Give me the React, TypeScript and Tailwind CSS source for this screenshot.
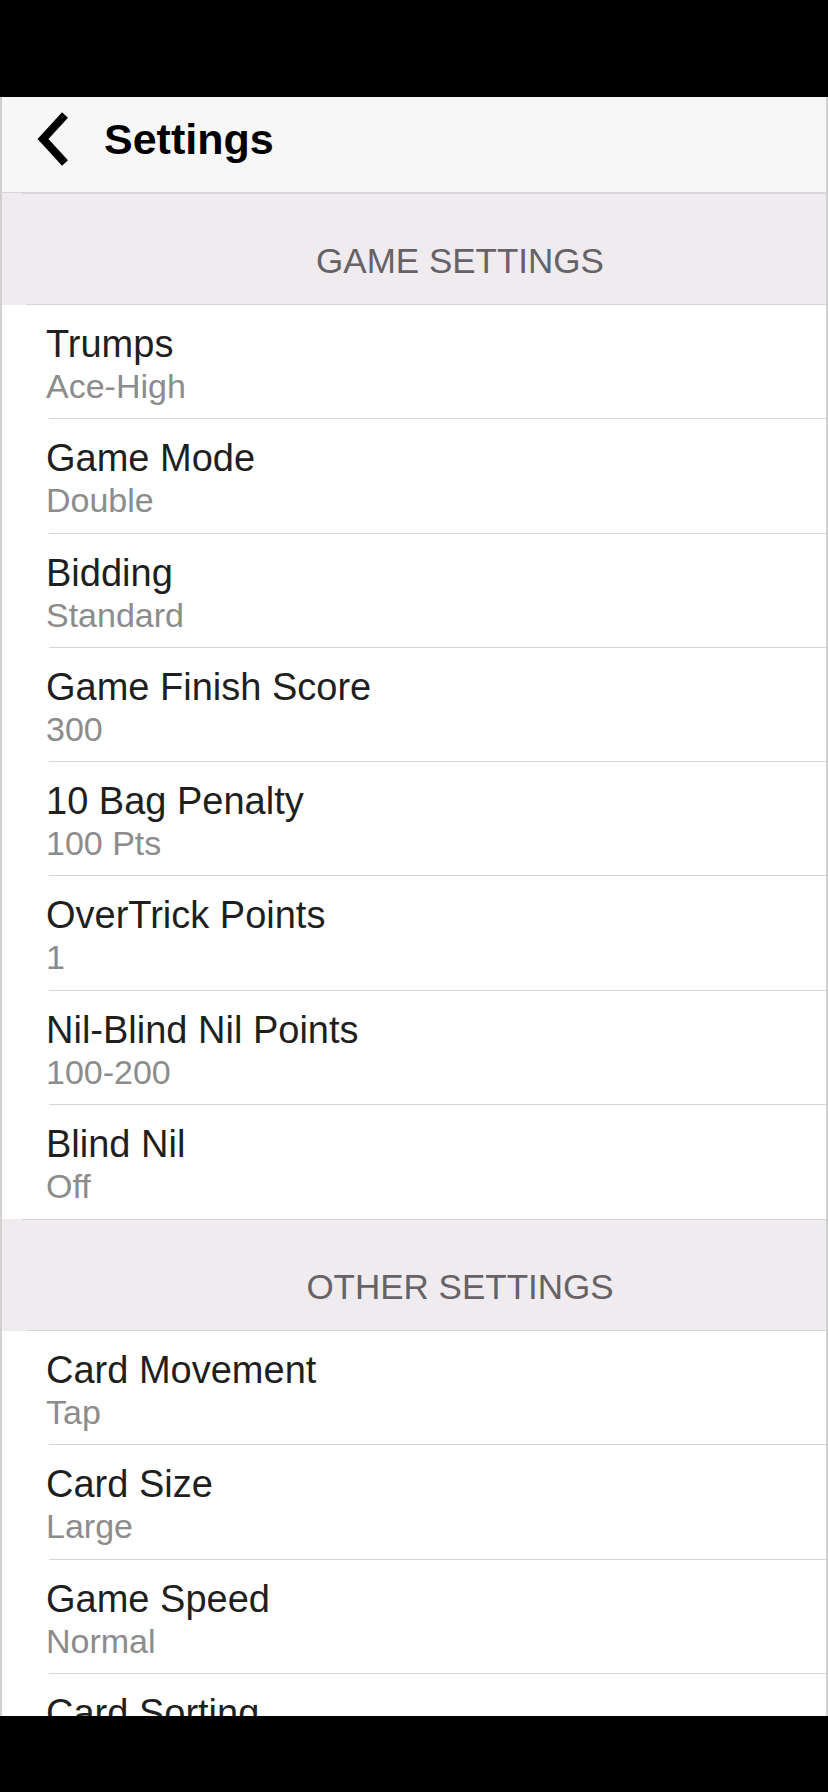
const gameSettings = [
  { title: 'Trumps', value: 'Ace-High' },
  { title: 'Game Mode', value: 'Double' },
  { title: 'Bidding', value: 'Standard' },
  { title: 'Game Finish Score', value: '300' },
  { title: '10 Bag Penalty', value: '100 Pts' },
  { title: 'OverTrick Points', value: '1' },
  { title: 'Nil-Blind Nil Points', value: '100-200' },
  { title: 'Blind Nil', value: 'Off' },
];

const otherSettings = [
  { title: 'Card Movement', value: 'Tap' },
  { title: 'Card Size', value: 'Large' },
  { title: 'Game Speed', value: 'Normal' },
  { title: 'Card Sorting', value: 'Ascending' },
];

const SectionHeader = ({ label }: { label: string }) => (
  <div className="relative h-[112px] bg-[#efebef] pl-[92px] pt-[50px] text-center">
    <div className="absolute left-[20px] right-0 top-0 h-px bg-[#d9d5d9]" />
    <div className="absolute left-[24px] right-0 bottom-0 h-px bg-[#d9d5d9]" />
    <p className="text-[35px] leading-none text-[#666266]">{label}</p>
  </div>
);

const SettingRow = ({ title, value, last }: { title: string; value: string; last?: boolean }) => (
  <div className="relative h-[114.25px] bg-white pl-[44px] pt-[20px]">
    <p className="text-[38px] leading-none text-[#1f1f1f]">{title}</p>
    <p className="mt-[6px] text-[34px] leading-none text-[#8c8c8c]">{value}</p>
    {!last && <div className="absolute left-[47px] right-0 bottom-0 h-px bg-[#d6d6d6]" />}
  </div>
);

export default function App() {
  return (
    <div
      className="flex h-[1792px] w-[828px] flex-col overflow-hidden bg-black"
      style={{ fontFamily: '"Liberation Sans", Arial, sans-serif' }}
    >
      <div className="h-[97px] shrink-0 bg-black" />
      <div className="flex-1 overflow-hidden border-x-2 border-[#d0d0d0] bg-white">
        <div className="flex h-[96px] items-center border-b border-[#d9d5d9] bg-[#f7f7f7]">
          <svg width="48" height="60" viewBox="0 0 48 60" className="mb-[8px] ml-[21px]">
            <polyline
              points="42,4 20,28 42,52"
              fill="none"
              stroke="#000"
              strokeWidth="8"
              strokeLinejoin="miter"
            />
          </svg>
          <h1 className="mb-[10px] ml-[33px] text-[43px] font-bold leading-none text-black">Settings</h1>
        </div>
        <SectionHeader label="GAME SETTINGS" />
        {gameSettings.map((s, i) => (
          <SettingRow key={s.title} title={s.title} value={s.value} last={i === gameSettings.length - 1} />
        ))}
        <SectionHeader label="OTHER SETTINGS" />
        {otherSettings.map((s) => (
          <SettingRow key={s.title} title={s.title} value={s.value} />
        ))}
      </div>
      <div className="h-[76px] shrink-0 bg-black" />
    </div>
  );
}
